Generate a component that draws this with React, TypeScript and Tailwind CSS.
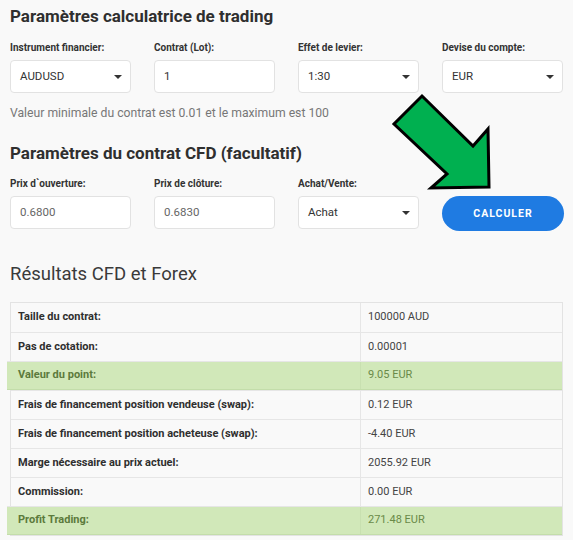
import React from "react";

type Row = { label: string; value: string; hi?: boolean };

const rows: Row[] = [
  { label: "Taille du contrat:", value: "100000 AUD" },
  { label: "Pas de cotation:", value: "0.00001" },
  { label: "Valeur du point:", value: "9.05 EUR", hi: true },
  { label: "Frais de financement position vendeuse (swap):", value: "0.12 EUR" },
  { label: "Frais de financement position acheteuse (swap):", value: "-4.40 EUR" },
  { label: "Marge nécessaire au prix actuel:", value: "2055.92 EUR" },
  { label: "Commission:", value: "0.00 EUR" },
  { label: "Profit Trading:", value: "271.48 EUR", hi: true },
];

function Caret() {
  return (
    <svg width="8" height="4" viewBox="0 0 8 4" className="text-[#333]">
      <path d="M0 0h8L4 4z" fill="currentColor" />
    </svg>
  );
}

function Field({ label, value, select, muted }: { label: string; value: string; select?: boolean; muted?: boolean }) {
  return (
    <div className="flex flex-col">
      <label className="text-[10px] font-bold text-[#333] leading-[12px] mb-[6px]">{label}</label>
      <div className="h-[33px] bg-white border border-[#e2e2e2] rounded-[4px] flex items-center justify-between pl-[9px] pr-[8px]">
        <span className={`text-[11.5px] ${muted ? "text-[#666]" : "text-[#333]"}`}>{value}</span>
        {select && <Caret />}
      </div>
    </div>
  );
}

export default function App() {
  return (
    <div className="relative w-[573px] h-[540px] overflow-hidden bg-[#f9f9f9] px-[10px] pt-[5px] text-[#333]" style={{ fontFamily: "Roboto, 'Liberation Sans', sans-serif" }}>
      <h2 className="text-[17px] font-bold leading-[22px] text-[#2f2f2f]">Paramètres calculatrice de trading</h2>

      <div className="grid grid-cols-[121px_121px_121px_121px] gap-x-[23px] mt-[15px]">
        <Field label="Instrument financier:" value="AUDUSD" select />
        <Field label="Contrat (Lot):" value="1" />
        <Field label="Effet de levier:" value="1:30" select />
        <Field label="Devise du compte:" value="EUR" select />
      </div>

      <p className="text-[12.2px] text-[#777] leading-[16px] mt-[12px]">Valeur minimale du contrat est 0.01 et le maximum est 100</p>

      <h2 className="text-[17px] font-bold leading-[22px] text-[#2f2f2f] mt-[21px]">Paramètres du contrat CFD (facultatif)</h2>

      <div className="grid grid-cols-[121px_121px_121px_122px] gap-x-[23px] mt-[14px] items-end">
        <Field label="Prix d`ouverture:" value="0.6800" muted />
        <Field label="Prix de clôture:" value="0.6830" muted />
        <Field label="Achat/Vente:" value="Achat" select />
        <button className="h-[35px] rounded-full bg-[#1f7be2] text-white text-[10.5px] font-bold tracking-[1px] translate-y-[2px]">CALCULER</button>
      </div>

      <h2 className="text-[18.5px] font-normal leading-[22px] text-[#3a3a3a] mt-[34px]">Résultats CFD et Forex</h2>

      <div className="mt-[17px] border border-[#e3e3e3] w-[553px]">
        {rows.map((r, i) => (
          <div
            key={i}
            className={`flex h-[29px] ${i > 0 ? "border-t border-[#e6e6e6]" : ""} ${r.hi ? "bg-[#d1e8b9] -ml-[4px] pl-[4px] text-[#5c7a3c] border-b border-b-[#c3ddaa]" : ""}`}
          >
            <div className={`w-[350px] flex items-center pl-[7px] text-[11px] font-bold border-r ${r.hi ? "border-[#c8e0b0] text-[#5c7a3c]" : "border-[#e6e6e6] text-[#2f2f2f]"}`}>{r.label}</div>
            <div className={`flex-1 flex items-center pl-[7px] text-[11px] ${r.hi ? "text-[#6a8a48]" : "text-[#444]"}`}>{r.value}</div>
          </div>
        ))}
      </div>

      <svg className="absolute left-0 top-0 pointer-events-none" width="573" height="540">
        <polygon
          points="422,96 473,146 488,129 489,187 431,188 447,174 394,124"
          fill="#00b050"
          stroke="#000"
          strokeWidth="3"
          strokeLinejoin="miter"
        />
      </svg>
    </div>
  );
}
